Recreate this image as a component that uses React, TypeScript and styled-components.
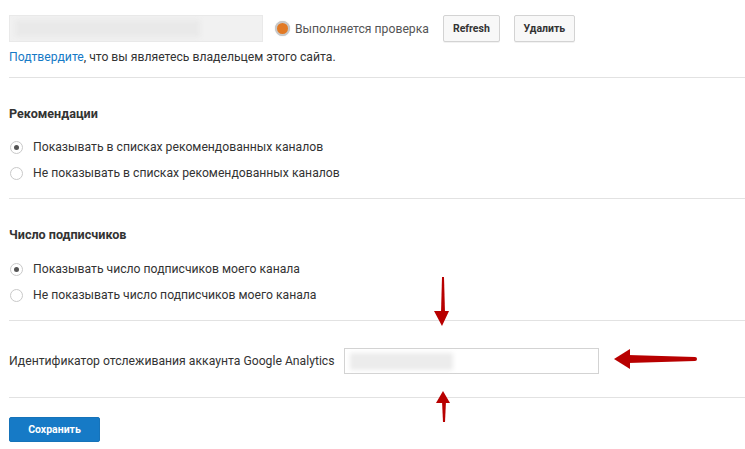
import React from "react";
import styled, { createGlobalStyle } from "styled-components";

const GlobalStyle = createGlobalStyle`
  html, body {
    margin: 0;
    padding: 0;
    background: #fff;
  }
  body {
    font-family: Roboto, "Noto Sans", Arial, sans-serif;
    font-size: 12.2px;
    color: #333;
  }
`;

const Page = styled.div`
  position: relative;
  width: 745px;
  height: 449px;
  overflow: hidden;
  padding-left: 9px;
  box-sizing: border-box;
`;

const TopBlock = styled.div`
  padding-top: 15px;
  padding-bottom: 12px;
`;

const TopRow = styled.div`
  display: flex;
  align-items: center;
  height: 27px;
`;

const BlurField = styled.div`
  width: 254px;
  height: 27px;
  box-sizing: border-box;
  background: #f1f1f1;
  border: 1px solid #e9e9e9;
  display: flex;
  align-items: center;
  padding-left: 5px;
`;

const Blur = styled.div<{ $w: number; $c: string }>`
  width: ${(p) => p.$w}px;
  height: 17px;
  background: ${(p) => p.$c};
  filter: blur(2px);
`;

const Status = styled.div`
  display: flex;
  align-items: center;
  margin-left: 12px;
  color: #555;
  gap: 5px;
  white-space: nowrap;
`;

const StatusDot = styled.span`
  width: 11px;
  height: 11px;
  border-radius: 50%;
  background: #e27a25;
  border: 2px solid #c8c8c8;
  box-shadow: 0 0 1px #bbb;
`;

const Button = styled.button<{ $w: number }>`
  width: ${(p) => p.$w}px;
  height: 27px;
  box-sizing: border-box;
  padding: 0;
  font-family: Roboto, Arial, sans-serif;
  font-size: 10.5px;
  font-weight: 700;
  color: #333;
  background: #f8f8f8;
  border: 1px solid #d3d3d3;
  border-radius: 2px;
  box-shadow: 0 1px 0 rgba(0, 0, 0, 0.05);
`;

const Buttons = styled.div`
  display: flex;
  gap: 14px;
  margin-left: 14px;
`;

const Note = styled.div`
  margin-top: 7px;
  line-height: 16px;
  color: #333;
`;

const Link = styled.a`
  color: #167ac6;
  text-decoration: none;
`;

const Section = styled.div<{ $top: number; $bottom: number }>`
  border-top: 1px solid #e2e2e2;
  padding-top: ${(p) => p.$top}px;
  padding-bottom: ${(p) => p.$bottom}px;
`;

const Heading = styled.div<{ $gap: number }>`
  font-size: 12.6px;
  font-weight: 700;
  line-height: 16px;
  color: #333;
  margin-bottom: ${(p) => p.$gap}px;
`;

const RadioRow = styled.label`
  display: flex;
  align-items: center;
  height: 26px;
  color: #333;
  white-space: nowrap;
`;

const RadioCircle = styled.span<{ $checked?: boolean }>`
  width: 13px;
  height: 13px;
  box-sizing: border-box;
  border-radius: 50%;
  border: 1px solid #c9c9c9;
  margin: 0 10px 0 1px;
  display: flex;
  align-items: center;
  justify-content: center;
  background: #fff;

  &::after {
    content: "";
    width: 5px;
    height: 5px;
    border-radius: 50%;
    background: ${(p) => (p.$checked ? "#555" : "transparent")};
  }
`;

const FieldRow = styled.div`
  display: flex;
  align-items: center;
`;

const FieldLabel = styled.div`
  color: #333;
  width: 335px;
  white-space: nowrap;
`;

const TextField = styled.div`
  width: 255px;
  height: 26px;
  box-sizing: border-box;
  border: 1px solid #d3d3d3;
  background: #fff;
  display: flex;
  align-items: center;
  padding-left: 5px;
`;

const SaveButton = styled.button`
  margin-top: 19px;
  width: 91px;
  height: 25px;
  border: 1px solid #1673b9;
  border-radius: 2px;
  background: #167ac6;
  color: #fff;
  font-family: Roboto, Arial, sans-serif;
  font-size: 10.5px;
  font-weight: 700;
`;

const Arrows = styled.svg`
  position: absolute;
  left: 0;
  top: 0;
  pointer-events: none;
`;

const RED = "#b80000";

export default function App() {
  return (
    <Page>
      <GlobalStyle />
      <TopBlock>
        <TopRow>
          <BlurField>
            <Blur $w={185} $c="#e9e9e9" />
          </BlurField>
          <Status>
            <StatusDot />
            Выполняется проверка
          </Status>
          <Buttons>
            <Button $w={57}>Refresh</Button>
            <Button $w={61}>Удалить</Button>
          </Buttons>
        </TopRow>
        <Note>
          <Link href="#">Подтвердите</Link>, что вы являетесь владельцем этого сайта.
        </Note>
      </TopBlock>

      <Section $top={28} $bottom={12}>
        <Heading $gap={12}>Рекомендации</Heading>
        <RadioRow>
          <RadioCircle $checked />
          Показывать в списках рекомендованных каналов
        </RadioRow>
        <RadioRow>
          <RadioCircle />
          Не показывать в списках рекомендованных каналов
        </RadioRow>
      </Section>

      <Section $top={28} $bottom={12}>
        <Heading $gap={13}>Число подписчиков</Heading>
        <RadioRow>
          <RadioCircle $checked />
          Показывать число подписчиков моего канала
        </RadioRow>
        <RadioRow>
          <RadioCircle />
          Не показывать число подписчиков моего канала
        </RadioRow>
      </Section>

      <Section $top={27} $bottom={23}>
        <FieldRow>
          <FieldLabel>Идентификатор отслеживания аккаунта Google Analytics</FieldLabel>
          <TextField>
            <Blur $w={103} $c="#ececec" />
          </TextField>
        </FieldRow>
      </Section>

      <Section $top={0} $bottom={0}>
        <SaveButton>Сохранить</SaveButton>
      </Section>

      <Arrows width="745" height="449" viewBox="0 0 745 449">
        {/* down arrow */}
        <polygon points="442,277 444,277 445,313 441,313" fill={RED} />
        <polygon points="434,311 449,311 442,326" fill={RED} />
        {/* up arrow */}
        <polygon points="442,401 446,401 445,422 443,422" fill={RED} />
        <polygon points="436,403 450,403 443,391" fill={RED} />
        {/* left arrow */}
        <polygon points="628,355 695,357 695,361 628,363" fill={RED} />
        <polygon points="630,349 630,369 614,359" fill={RED} />
        <circle cx="695" cy="359" r="2" fill={RED} />
      </Arrows>
    </Page>
  );
}
